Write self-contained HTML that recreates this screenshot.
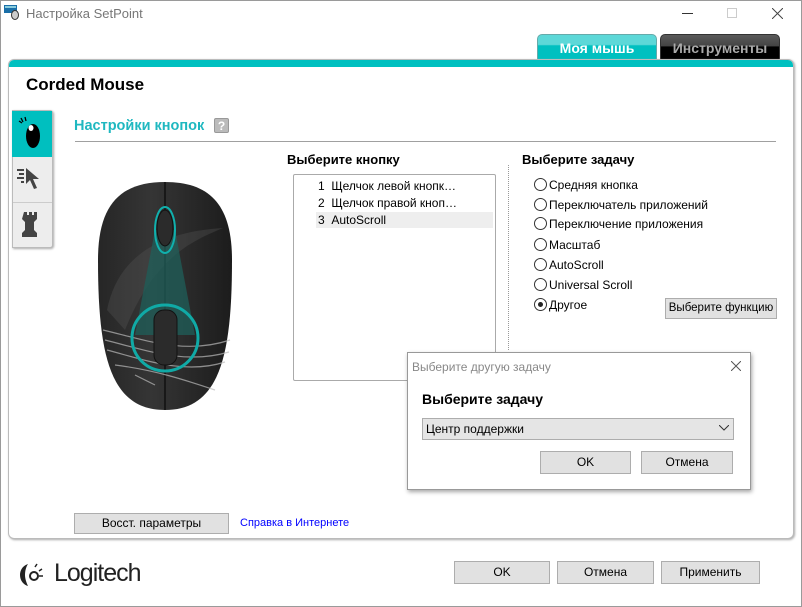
<!DOCTYPE html>
<html><head><meta charset="utf-8"><style>
*{box-sizing:border-box;margin:0;padding:0}
body{width:802px;height:607px;background:#fff;font-family:"Liberation Sans",sans-serif;font-size:12px;color:#000;position:relative;overflow:hidden}
.a{position:absolute}
.win{left:0;top:0;width:802px;height:607px;border:1px solid #9a9a9a}
.btn{position:absolute;background:#e1e1e1;border:1px solid #adadad;text-align:center;font-size:12px}
.rad{position:absolute;left:534px;width:13px;height:13px;border:1px solid #333;border-radius:50%;background:#fff}
.rl{position:absolute;left:549px;font-size:12px}
</style></head><body>
<div class="a win"></div>
<svg class="a" style="left:4px;top:4px" width="16" height="16"><rect x="0" y="1" width="13" height="8" fill="#1a6fa8"/><rect x="1" y="2" width="11" height="2" fill="#8cd"/><ellipse cx="11" cy="11" rx="3.5" ry="4.5" fill="#ccc" stroke="#333"/></svg>
<div class="a" style="left:26px;top:6px;font-size:13px;color:#777">Настройка SetPoint</div>
<div class="a" style="left:682px;top:13px;width:11px;height:1px;background:#333"></div>
<div class="a" style="left:727px;top:8px;width:10px;height:10px;border:1px solid #ccc"></div>
<svg class="a" style="left:772px;top:8px" width="11" height="11"><path d="M0 0L11 11M11 0L0 11" stroke="#444" stroke-width="1"/></svg>
<!-- tabs -->
<div class="a" style="left:537px;top:34px;width:120px;height:26px;border-radius:5px 5px 0 0;border:1px solid #6aa;background:linear-gradient(#5dd8d8 0,#5dd8d8 40%,#00c0c0 45%,#00c0c0);color:#fff;font-weight:bold;font-size:14px;text-align:center;line-height:26px">Моя мышь</div>
<div class="a" style="left:660px;top:34px;width:120px;height:26px;border-radius:5px 5px 0 0;border:1px solid #333;background:linear-gradient(#5a5a5a 0,#444 45%,#000 50%,#000);color:#aaa;font-weight:bold;font-size:14px;text-align:center;line-height:26px">Инструменты</div>
<!-- panel -->
<div class="a" style="left:8px;top:59px;width:786px;height:480px;border-radius:6px;background:#fff;border:1px solid #bbb;box-shadow:1px 1px 2px #aaa;overflow:hidden"><div style="height:7px;background:#00c0c0"></div></div>
<div class="a" style="left:26px;top:75px;font-size:17px;font-weight:bold">Corded Mouse</div>
<!-- sidebar -->
<div class="a" style="left:12px;top:110px;width:41px;height:138px;background:#ededed;border:1px solid #bbb;border-radius:0 3px 3px 0;box-shadow:1px 1px 2px #aaa"></div>
<div class="a" style="left:12px;top:111px;width:40px;height:46px;background:#00bfbf"></div>
<div class="a" style="left:13px;top:202px;width:39px;height:1px;background:#ccc"></div>
<svg class="a" style="left:16px;top:116px" width="30" height="36"><path d="M3 5l3 2M5 2l2 4M9 1l1 4" stroke="#000" stroke-width="1.3"/><ellipse cx="17" cy="20" rx="7" ry="12" fill="#000"/><ellipse cx="15" cy="12" rx="2.5" ry="3" fill="#fff"/></svg>
<svg class="a" style="left:17px;top:166px" width="30" height="28"><path d="M0 4h7M2 8h5M0 12h7M4 16h3" stroke="#444" stroke-width="2"/><path d="M9 2l13 11h-6l4 9-3 1-4-9-4 4z" fill="#444"/></svg>
<svg class="a" style="left:22px;top:212px" width="20" height="26"><path d="M2 0h3v3h2v-3h3v3h2v-3h3v7l-3 3v8l3 3v4h-15v-4l3-3v-8l-3-3z" fill="#444"/></svg>
<!-- section header -->
<div class="a" style="left:74px;top:118px;font-size:14.5px;font-weight:bold;color:#1fb8c0">Настройки кнопок</div>
<div class="a" style="left:214px;top:118px;width:15px;height:15px;background:#bbb;border:1px solid #999;border-radius:2px;color:#fff;font-weight:bold;font-size:12px;text-align:center;line-height:14px">?</div>
<div class="a" style="left:75px;top:141px;width:701px;height:1px;background:#a0a0a0"></div>
<!-- mouse -->
<svg class="a" style="left:95px;top:180px" width="140" height="232" viewBox="0 0 140 232">
<defs><linearGradient id="g" x1="0" x2="1"><stop offset="0" stop-color="#262626"/><stop offset=".4" stop-color="#353535"/><stop offset="1" stop-color="#1c1c1c"/></linearGradient></defs>
<path d="M70 2C25 2 3 25 3 80C3 175 15 230 70 230C125 230 137 175 137 80C137 25 115 2 70 2Z" fill="url(#g)"/>
<path d="M12 130C22 80 60 52 128 48C100 60 60 75 30 150Z" fill="#555" opacity=".35"/>
<path d="M70 2V230" stroke="#111" stroke-width="1.5"/>
<path d="M8 150C50 160 90 175 135 160M10 160C50 170 90 185 134 172M12 170C50 180 90 195 130 182M20 185C60 190 90 200 120 210M40 195L60 205" stroke="#bbb" stroke-width="1.2" fill="none" opacity=".7"/>
<path d="M60 50L80 50L100 155L40 155Z" fill="#1f5f5a" opacity=".75"/>
<ellipse cx="70" cy="48" rx="8" ry="18" fill="#2b2b2b" stroke="#111"/>
<ellipse cx="70" cy="50" rx="10" ry="23" fill="none" stroke="#10b0ad" stroke-width="2"/>
<rect x="59" y="130" width="23" height="55" rx="10" fill="#2b2b2b" stroke="#111"/>
<circle cx="70" cy="158" r="33" fill="none" stroke="#10aaa6" stroke-width="3"/>
</svg>
<!-- button list -->
<div class="a" style="left:287px;top:152px;font-size:13px;font-weight:bold">Выберите кнопку</div>
<div class="a" style="left:293px;top:174px;width:203px;height:207px;border:1px solid #aaa;border-radius:2px"></div>
<div class="a" style="left:316px;top:212px;width:177px;height:16px;background:#eee"></div>
<div class="a" style="left:318px;top:178px;line-height:17px;font-size:12px">1&nbsp;&nbsp;Щелчок левой кнопк…<br>2&nbsp;&nbsp;Щелчок правой кноп…<br>3&nbsp;&nbsp;AutoScroll</div>
<div class="a" style="left:508px;top:165px;height:185px;border-left:1px dotted #999"></div>
<!-- task -->
<div class="a" style="left:522px;top:152px;font-size:13px;font-weight:bold">Выберите задачу</div>
<div class="rad" style="top:178px"></div><div class="rl" style="top:178px">Средняя кнопка</div>
<div class="rad" style="top:198px"></div><div class="rl" style="top:198px">Переключатель приложений</div>
<div class="rad" style="top:217px"></div><div class="rl" style="top:217px">Переключение приложения</div>
<div class="rad" style="top:238px"></div><div class="rl" style="top:238px">Масштаб</div>
<div class="rad" style="top:258px"></div><div class="rl" style="top:258px">AutoScroll</div>
<div class="rad" style="top:278px"></div><div class="rl" style="top:278px">Universal Scroll</div>
<div class="rad" style="top:298px"><div class="a" style="left:3px;top:3px;width:5px;height:5px;border-radius:50%;background:#222"></div></div><div class="rl" style="top:298px">Другое</div>
<div class="btn" style="left:665px;top:298px;width:112px;height:21px;line-height:19px;font-size:11.5px">Выберите функцию</div>
<!-- dialog -->
<div class="a" style="left:407px;top:352px;width:344px;height:138px;background:#fff;border:1px solid #999;box-shadow:1px 2px 4px rgba(0,0,0,.35)"></div>
<div class="a" style="left:412px;top:360px;font-size:12px;color:#888">Выберите другую задачу</div>
<svg class="a" style="left:731px;top:361px" width="10" height="10"><path d="M0 0L10 10M10 0L0 10" stroke="#555"/></svg>
<div class="a" style="left:422px;top:391px;font-size:14px;font-weight:bold">Выберите задачу</div>
<div class="a" style="left:422px;top:418px;width:312px;height:22px;background:#e5e5e5;border:1px solid #adadad;padding-left:3px;line-height:20px;font-size:12px">Центр поддержки</div>
<svg class="a" style="left:719px;top:425px" width="10" height="6"><path d="M0 0L5 5L10 0" stroke="#333" fill="none"/></svg>
<div class="btn" style="left:540px;top:451px;width:91px;height:23px;line-height:21px">OK</div>
<div class="btn" style="left:641px;top:451px;width:92px;height:23px;line-height:21px">Отмена</div>
<!-- bottom of panel -->
<div class="btn" style="left:74px;top:513px;width:155px;height:21px;line-height:19px">Восст. параметры</div>
<div class="a" style="left:240px;top:517px;color:#00f;font-size:11px">Справка в Интернете</div>
<!-- footer -->
<svg class="a" style="left:19px;top:563px" width="28" height="24"><path d="M9 1C3 3 1 8 1 12C1 18 5 22 9 23C7 19 6 15 6 12C6 8 7 4 9 1Z" fill="#222"/><circle cx="15" cy="13" r="4" fill="none" stroke="#222" stroke-width="2"/><path d="M16 4l2-3M20 8l3-2M20 13h4" stroke="#222" stroke-width="1.5"/></svg>
<div class="a" style="left:54px;top:559px;font-size:25px;color:#222;letter-spacing:-1px">Logitech</div>
<div class="btn" style="left:454px;top:561px;width:96px;height:23px;line-height:21px">OK</div>
<div class="btn" style="left:557px;top:561px;width:97px;height:23px;line-height:21px">Отмена</div>
<div class="btn" style="left:661px;top:561px;width:99px;height:23px;line-height:21px">Применить</div>
</body></html>
